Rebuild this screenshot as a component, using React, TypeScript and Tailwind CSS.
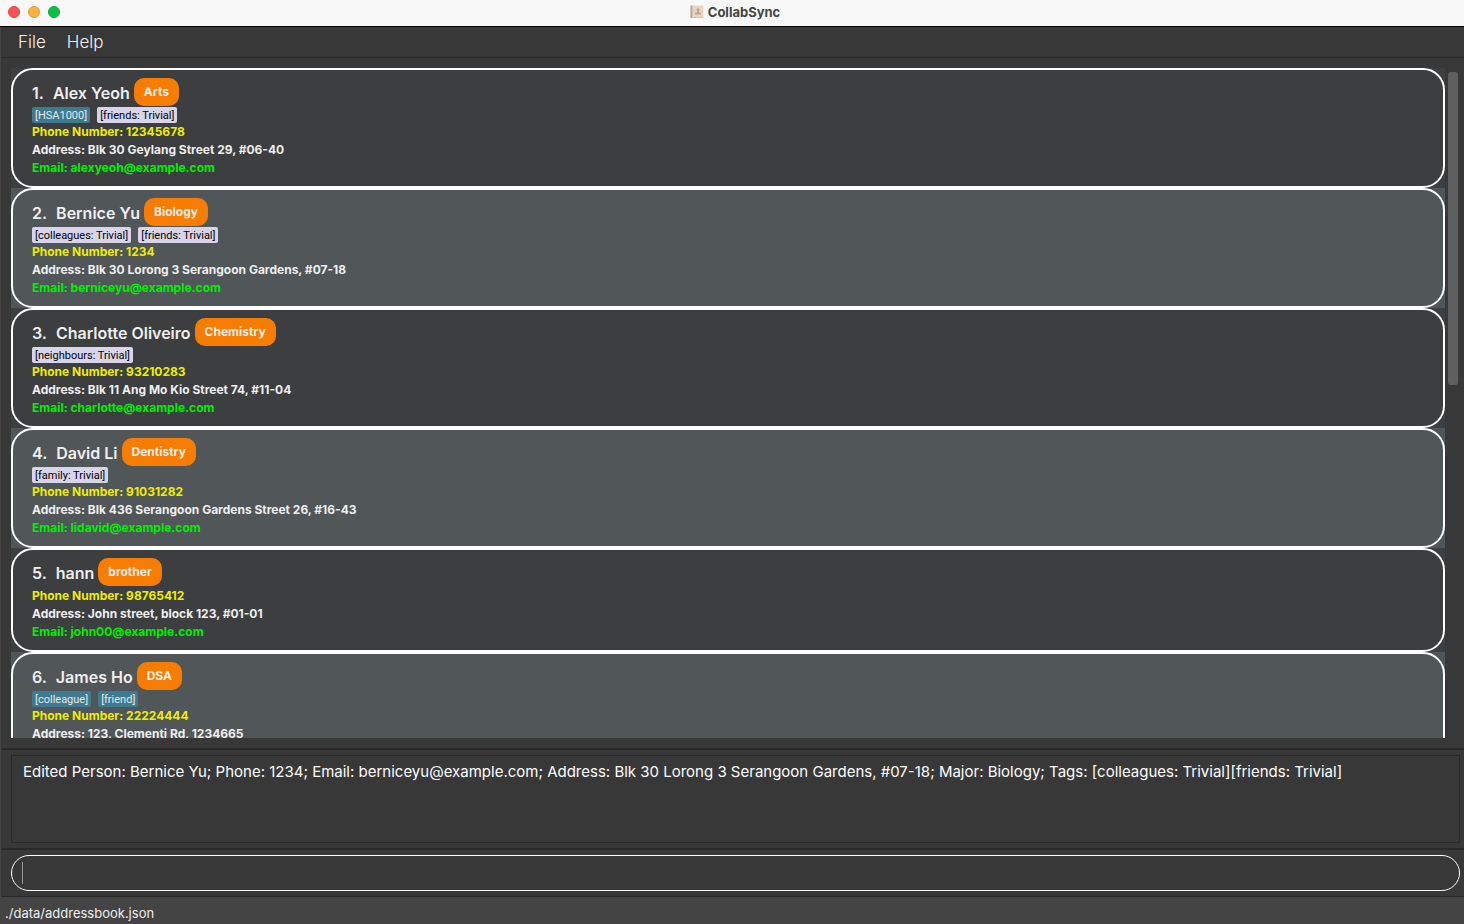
import React from "react";

type Tag = { label: string; priority?: boolean };

type Person = {
  name: string;
  major: string;
  tags: Tag[];
  phone: string;
  address: string;
  email: string;
};

const people: Person[] = [
  {
    name: "Alex Yeoh",
    major: "Arts",
    tags: [{ label: "HSA1000" }, { label: "friends: Trivial", priority: true }],
    phone: "12345678",
    address: "Blk 30 Geylang Street 29, #06-40",
    email: "alexyeoh@example.com",
  },
  {
    name: "Bernice Yu",
    major: "Biology",
    tags: [
      { label: "colleagues: Trivial", priority: true },
      { label: "friends: Trivial", priority: true },
    ],
    phone: "1234",
    address: "Blk 30 Lorong 3 Serangoon Gardens, #07-18",
    email: "berniceyu@example.com",
  },
  {
    name: "Charlotte Oliveiro",
    major: "Chemistry",
    tags: [{ label: "neighbours: Trivial", priority: true }],
    phone: "93210283",
    address: "Blk 11 Ang Mo Kio Street 74, #11-04",
    email: "charlotte@example.com",
  },
  {
    name: "David Li",
    major: "Dentistry",
    tags: [{ label: "family: Trivial", priority: true }],
    phone: "91031282",
    address: "Blk 436 Serangoon Gardens Street 26, #16-43",
    email: "lidavid@example.com",
  },
  {
    name: "hann",
    major: "brother",
    tags: [],
    phone: "98765412",
    address: "John street, block 123, #01-01",
    email: "john00@example.com",
  },
  {
    name: "James Ho",
    major: "DSA",
    tags: [{ label: "colleague" }, { label: "friend" }],
    phone: "22224444",
    address: "123, Clementi Rd, 1234665",
    email: "jamesho@example.com",
  },
];

function AddressBookIcon() {
  return (
    <svg width="14" height="14" viewBox="0 0 14 14" aria-hidden="true">
      <rect x="0.5" y="0.5" width="13" height="12.5" rx="0.5" fill="#ead5bb" />
      <rect x="0.5" y="0.5" width="2" height="12.5" fill="#b5aca6" />
      <rect x="2.5" y="12" width="11" height="1" fill="#d8c6b0" />
      <circle cx="8" cy="4.8" r="1.6" fill="#b3a8a0" />
      <path d="M7.2 5.8h1.6v1.4l2.2.8v1.6H5V8l2.2-.8z" fill="#b3a8a0" />
    </svg>
  );
}

function TitleBar() {
  return (
    <header className="relative flex h-[27px] shrink-0 items-center justify-center border-b border-black bg-[#f8f8f8] pb-[3px] pl-1.5">
      <div className="absolute left-2 top-1.5 flex gap-2">
        <button aria-label="Close" className="size-3 rounded-full border border-[#e0443e] bg-[#ff4f57]" />
        <button aria-label="Minimize" className="size-3 rounded-full border border-[#e09a35] bg-[#fdb043]" />
        <button aria-label="Zoom" className="size-3 rounded-full border border-[#0fa63c] bg-[#07c244]" />
      </div>
      <h1 className="flex items-center gap-1 text-[13px] font-bold leading-4 text-[#444444]">
        <AddressBookIcon />
        CollabSync
      </h1>
    </header>
  );
}

function PersonCard({ person, index }: { person: Person; index: number }) {
  return (
    <li className="odd:bg-[#3c3e3f] even:bg-[#515658]">
      <article className="rounded-[22px] border-2 border-white px-[19px] pb-[9px] pt-2 text-[12px] font-bold leading-[18px] text-[#efefef]">
        <div className="flex items-center gap-1">
          <h2 className="flex gap-[9px] pt-0.5 text-[16px] font-semibold leading-6">
            <span>{index}.</span>
            <span>{person.name}</span>
          </h2>
          <span className="rounded-[10px] bg-[#f77d00] px-2.5 py-[5px]">{person.major}</span>
        </div>
        <div className="mt-px flex gap-[7px] font-['Roboto',sans-serif] text-[11px] font-normal leading-[14px]">
          {person.tags.map((tag) => (
            <span
              key={tag.label}
              className={
                tag.priority
                  ? "rounded-[2px] bg-[#d8d5ea] px-[3px] pt-0.5 text-black"
                  : "rounded-[2px] bg-[#3e7b91] px-[3px] pt-0.5 text-[#e4e9eb]"
              }
            >
              [{tag.label}]
            </span>
          ))}
        </div>
        <p className="text-[#eeee00]">Phone Number: {person.phone}</p>
        <p>Address: {person.address}</p>
        <p className="text-[#00ee00]">Email: {person.email}</p>
      </article>
    </li>
  );
}

export default function App() {
  return (
    <div className="flex h-screen flex-col overflow-hidden bg-[#383838] font-['Inter',sans-serif]">
      <TitleBar />
      <div className="flex min-h-0 flex-1 flex-col border-l border-[#454545]">
        <nav className="flex h-[31px] shrink-0 items-center gap-[21px] border-b border-[#282828] pl-[17px] text-[17px] font-light leading-6 text-[#f2f2f2]">
          <button>File</button>
          <button>Help</button>
        </nav>

        <main className="mb-2.5 mt-2.5 flex min-h-0 flex-1 gap-[3px] pl-2.5 pr-1.5">
          <ul className="min-w-0 flex-1 overflow-hidden">
            {people.map((person, i) => (
              <PersonCard key={person.name} person={person} index={i + 1} />
            ))}
          </ul>
          <div className="w-2.5 pt-1">
            <div className="h-[47%] rounded-[3px] bg-[#5f5f5f]" />
          </div>
        </main>

        <section className="shrink-0 border-t-2 border-[#292929] pb-[5px] pl-2.5 pr-1 pt-[5px]">
          <textarea
            readOnly
            aria-label="Result"
            className="block h-[88px] w-full resize-none border border-[#292929] bg-transparent px-[11px] py-1 text-[15px] leading-6 text-white outline-none"
            value="Edited Person: Bernice Yu; Phone: 1234; Email: berniceyu@example.com; Address: Blk 30 Lorong 3 Serangoon Gardens, #07-18; Major: Biology; Tags: [colleagues: Trivial][friends: Trivial]"
          />
        </section>

        <section className="shrink-0 border-t-2 border-[#292929] pb-[5px] pl-2.5 pr-1 pt-[5px]">
          <div className="flex h-9 items-center rounded-[18px] border border-white px-2.5">
            <span className="h-[22px] w-px bg-[#9a9a9a]" />
            <input
              aria-label="Command"
              className="min-w-0 flex-1 bg-transparent text-[15px] text-white outline-none"
            />
          </div>
        </section>

        <footer className="h-7 shrink-0 border-t border-[#292929] bg-[#444444] pl-1 pt-1 text-[13px] leading-6 text-[#efefef]">
          ./data/addressbook.json
        </footer>
      </div>
    </div>
  );
}
